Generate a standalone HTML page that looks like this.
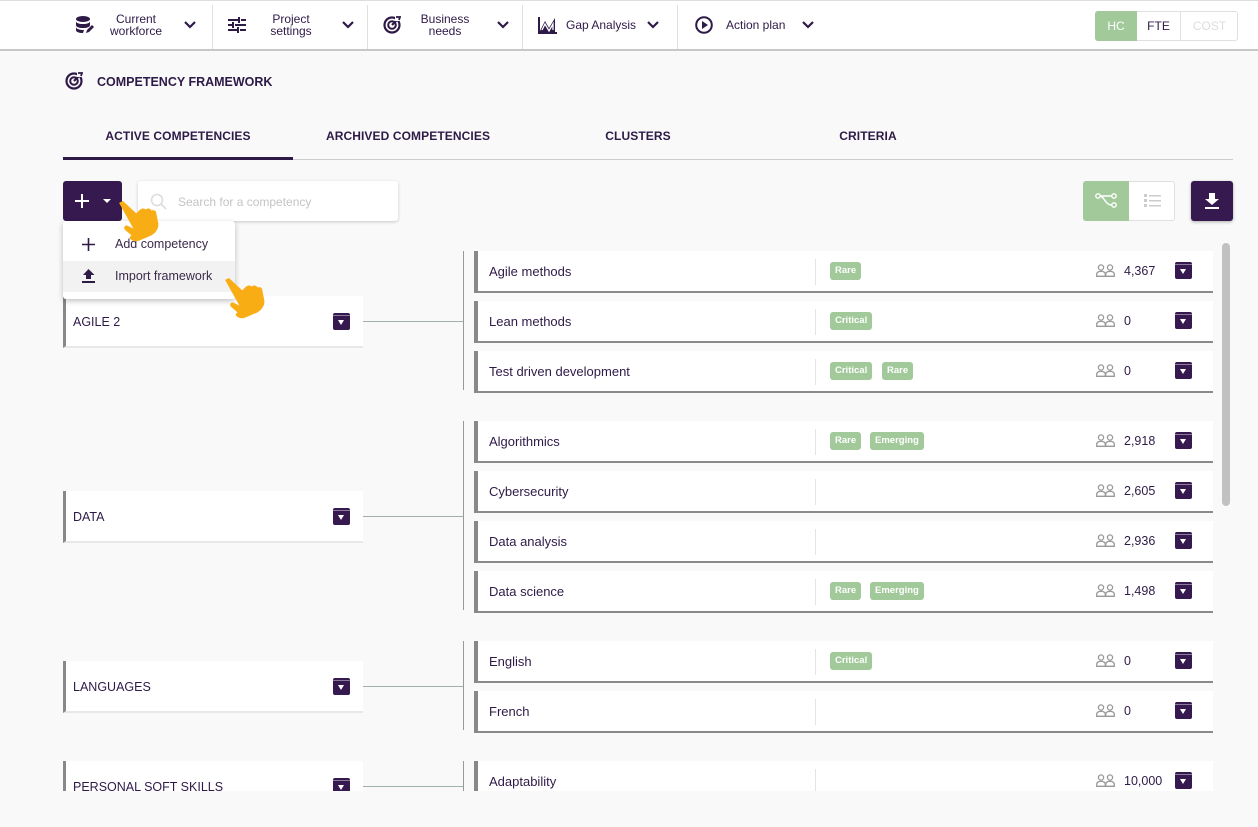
<!DOCTYPE html>
<html><head><meta charset="utf-8"><style>
*{box-sizing:border-box;margin:0;padding:0}
html,body{width:1258px;height:827px;overflow:hidden}
body{background:#f9f9f9;font-family:"Liberation Sans",sans-serif;color:#2a1a3a;position:relative}
.a{position:absolute}
.nav{left:0;top:0;width:1258px;height:51px;background:#fff;border-top:1px solid #ddd;border-bottom:2px solid #c8c8c8}
.ni{top:1px;height:48px;display:flex;align-items:center;font-size:12px;color:#2e1a47;line-height:12px;text-align:center}
.sep{top:5px;width:1px;height:44px;background:#e0e0e0}
.tab{top:129px;width:230px;text-align:center;font-size:12px;font-weight:bold;color:#2e1a47;letter-spacing:.1px}
.row{left:474px;width:739px;height:42px;background:#fff;border-left:4px solid #888;border-bottom:2px solid #8a8a8a}
.row .n{position:absolute;left:11px;top:13px;font-size:13px;color:#2e1a47}
.row .d{position:absolute;left:337px;top:8px;width:1px;height:26px;background:#e4e4e4}
.tag{position:absolute;top:11px;height:18px;padding:0 5px;background:#a1c99a;color:#fff;font-size:9.5px;font-weight:bold;line-height:18px;border-radius:3px}
.row .num{position:absolute;left:646px;top:13px;font-size:12.5px;color:#2e1a47}
.row .pp{position:absolute;left:618px;top:13px}
.arc{position:absolute;width:17px;height:17px;background:#35194f;border-radius:2px}
.arc:before{content:"";position:absolute;left:0;right:0;top:2px;height:1px;background:#8a7a9a}
.arc:after{content:"";position:absolute;left:5px;top:7px;border-left:3.5px solid transparent;border-right:3.5px solid transparent;border-top:5px solid #fff}
.row .arc{left:697px;top:11px}
.cl{left:63px;width:300px;height:52px;background:#fff;border-left:3px solid #888;border-bottom:2px solid #e8e8e8}
.cl .t{position:absolute;left:7px;top:19px;font-size:12.5px;color:#2e1a47}
.cl .arc{left:267px;top:17px}
.vl{left:463px;width:1px;background:#999}
.hl{left:363px;width:100px;height:1px;background:#9fb2a8}
</style></head><body>
<div class="a nav"></div>
<div class="a ni" style="left:74px">
<svg width="20" height="20" viewBox="0 0 20 20"><ellipse cx="9" cy="4" rx="7" ry="3" fill="#2e1a47"/><path d="M2 6v4c0 2 3 3 7 3s7-1 7-3V6c0 2-3 3-7 3S2 8 2 6z" fill="#2e1a47"/><path d="M2 12v3c0 2 3 3 7 3l1-3c-4 0-8-1-8-3z" fill="#2e1a47"/><path d="M12 18l1-3 5-5 2 2-5 5z" fill="#2e1a47"/></svg>
<div style="width:78px;margin-left:3px">Current<br>workforce</div>
<svg width="12" height="8" viewBox="0 0 12 8" style="margin-left:9px"><path d="M1 1l5 5 5-5" stroke="#2e1a47" stroke-width="2.2" fill="none"/></svg></div>
<div class="a sep" style="left:212px"></div>
<div class="a ni" style="left:228px">
<svg width="18" height="16" viewBox="0 0 18 16"><g stroke="#2e1a47" stroke-width="2"><path d="M0 3h10M13 3h5M0 8h4M7 8h11M0 13h9M12 13h6"/><path d="M11 0v6M5 5v6M10 10v6"/></g></svg>
<div style="width:90px;margin-left:0">Project<br>settings</div>
<svg width="12" height="8" viewBox="0 0 12 8" style="margin-left:6px"><path d="M1 1l5 5 5-5" stroke="#2e1a47" stroke-width="2.2" fill="none"/></svg></div>
<div class="a sep" style="left:367px"></div>
<div class="a ni" style="left:383px">
<svg width="18" height="18" viewBox="0 0 18 18"><circle cx="9" cy="9" r="7.5" fill="none" stroke="#2e1a47" stroke-width="2.2"/><circle cx="9" cy="9" r="3.8" fill="none" stroke="#2e1a47" stroke-width="2"/><path d="M9 9l7-7" stroke="#2e1a47" stroke-width="2.2"/><rect x="12" y="0" width="6" height="5" fill="#fff"/><path d="M13 1l4 0-1 3" stroke="#2e1a47" stroke-width="1.8" fill="none"/></svg>
<div style="width:88px;margin-left:0">Business<br>needs</div>
<svg width="12" height="8" viewBox="0 0 12 8" style="margin-left:8px"><path d="M1 1l5 5 5-5" stroke="#2e1a47" stroke-width="2.2" fill="none"/></svg></div>
<div class="a sep" style="left:522px"></div>
<div class="a ni" style="left:538px">
<svg width="19" height="17" viewBox="0 0 19 17"><path d="M1 0v16h18" stroke="#2e1a47" stroke-width="2" fill="none"/><path d="M2 14l5-10 4 7 6-10v14H2z" fill="#2e1a47"/><path d="M4 13l3-6 4 7 4-7v6" stroke="#fff" stroke-width="1.3" fill="none"/></svg>
<div style="margin-left:9px">Gap Analysis</div>
<svg width="12" height="8" viewBox="0 0 12 8" style="margin-left:11px"><path d="M1 1l5 5 5-5" stroke="#2e1a47" stroke-width="2.2" fill="none"/></svg></div>
<div class="a sep" style="left:677px"></div>
<div class="a ni" style="left:695px">
<svg width="18" height="18" viewBox="0 0 18 18"><circle cx="9" cy="9" r="7.8" fill="none" stroke="#2e1a47" stroke-width="2"/><path d="M7 5v8l6-4z" fill="#2e1a47"/></svg>
<div style="margin-left:13px">Action plan</div>
<svg width="12" height="8" viewBox="0 0 12 8" style="margin-left:17px"><path d="M1 1l5 5 5-5" stroke="#2e1a47" stroke-width="2.2" fill="none"/></svg></div>
<div class="a" style="left:1095px;top:11px;width:143px;height:30px;border:1px solid #e0e0e0;border-radius:3px;background:#fff;font-size:12px;font-weight:bold">
<div class="a" style="left:-1px;top:-1px;width:42px;height:30px;background:#a1c99a;color:#fff;border-radius:3px 0 0 3px;text-align:center;line-height:30px;font-weight:normal">HC</div>
<div class="a" style="left:41px;top:0;width:44px;height:28px;border-right:1px solid #e0e0e0;color:#2e1a47;text-align:center;line-height:28px;font-weight:normal">FTE</div>
<div class="a" style="left:85px;top:0;width:57px;height:28px;color:#ddd;text-align:center;line-height:28px;font-weight:normal">COST</div></div>
<svg class="a" style="left:65px;top:72px" width="18" height="18" viewBox="0 0 18 18"><circle cx="9" cy="9" r="7.5" fill="none" stroke="#2e1a47" stroke-width="2.2"/><circle cx="9" cy="9" r="3.8" fill="none" stroke="#2e1a47" stroke-width="2"/><path d="M9 9l7-7" stroke="#2e1a47" stroke-width="2.2"/><rect x="12" y="0" width="6" height="5" fill="#f9f9f9"/><path d="M13 1l4 0-1 3" stroke="#2e1a47" stroke-width="1.8" fill="none"/></svg>
<div class="a" style="left:97px;top:75px;font-size:12.5px;font-weight:bold;color:#2e1a47">COMPETENCY FRAMEWORK</div>
<div class="a tab" style="left:63px">ACTIVE COMPETENCIES</div>
<div class="a tab" style="left:293px">ARCHIVED COMPETENCIES</div>
<div class="a tab" style="left:523px">CLUSTERS</div>
<div class="a tab" style="left:753px">CRITERIA</div>
<div class="a" style="left:63px;top:159px;width:1170px;height:1px;background:#ccc"></div>
<div class="a" style="left:63px;top:157px;width:230px;height:3px;background:#2e1a47"></div>
<div class="a" style="left:63px;top:181px;width:59px;height:40px;background:#35194f;border-radius:3px"></div>
<svg class="a" style="left:75px;top:194px" width="14" height="14"><path d="M7 0v14M0 7h14" stroke="#fff" stroke-width="2"/></svg>
<svg class="a" style="left:103px;top:199px" width="8" height="5"><path d="M0 0h8L4 4z" fill="#fff"/></svg>
<div class="a" style="left:138px;top:181px;width:260px;height:40px;background:#fff;border-radius:3px;box-shadow:0 1px 3px rgba(0,0,0,.2)"></div>
<svg class="a" style="left:150px;top:193px" width="17" height="17"><circle cx="7" cy="7" r="5.5" stroke="#ddd" stroke-width="1.6" fill="none"/><path d="M11 11l5 5" stroke="#ddd" stroke-width="1.6"/></svg>
<div class="a" style="left:178px;top:195px;font-size:12px;color:#c4c4c4">Search for a competency</div>
<div class="a" style="left:1083px;top:181px;width:92px;height:40px;border:1px solid #e0e0e0;border-radius:3px;background:#fff"></div>
<div class="a" style="left:1083px;top:181px;width:46px;height:40px;background:#a1c99a;border-radius:3px 0 0 3px"></div>
<svg class="a" style="left:1095px;top:193px" width="24" height="16"><circle cx="3" cy="3" r="2.2" stroke="#fff" stroke-width="1.4" fill="none"/><circle cx="19" cy="3" r="2.2" stroke="#fff" stroke-width="1.4" fill="none"/><circle cx="19" cy="12" r="2.2" stroke="#fff" stroke-width="1.4" fill="none"/><path d="M5 3h12M5 3c4 0 5 9 12 9" stroke="#fff" stroke-width="1.4" fill="none"/></svg>
<svg class="a" style="left:1144px;top:193px" width="18" height="15" fill="#ccc"><rect x="0" y="1" width="3" height="3"/><rect x="0" y="6" width="3" height="3"/><rect x="0" y="11" width="3" height="3"/><rect x="5" y="2" width="12" height="1.5"/><rect x="5" y="7" width="12" height="1.5"/><rect x="5" y="12" width="12" height="1.5"/></svg>
<div class="a" style="left:1191px;top:181px;width:42px;height:40px;background:#35194f;border-radius:3px;box-shadow:0 1px 3px rgba(0,0,0,.3)"></div>
<svg class="a" style="left:1204px;top:193px" width="16" height="16"><path d="M5 0h6v6h4l-7 6-7-6h4z" fill="#fff"/><rect x="1" y="14" width="14" height="2" fill="#fff"/></svg>
<div class="a" style="left:1222px;top:243px;width:8px;height:263px;background:#c1c1c1;border-radius:4px"></div>
<div class="a" style="left:0;top:240px;width:1258px;height:551px;overflow:hidden">
<div class="a" style="left:0;top:-240px;width:1258px;height:791px">
<div class="a vl" style="top:251px;height:139px"></div>
<div class="a vl" style="top:421px;height:189px"></div>
<div class="a vl" style="top:641px;height:89px"></div>
<div class="a vl" style="top:761px;height:30px"></div>
<div class="a hl" style="top:321px"></div>
<div class="a hl" style="top:516px"></div>
<div class="a hl" style="top:686px"></div>
<div class="a hl" style="top:786px"></div>
<div class="a cl" style="top:296px"><div class="t">AGILE 2</div><div class="arc"></div></div>
<div class="a cl" style="top:491px"><div class="t">DATA</div><div class="arc"></div></div>
<div class="a cl" style="top:661px"><div class="t">LANGUAGES</div><div class="arc"></div></div>
<div class="a cl" style="top:761px;height:30px;border-bottom:none"><div class="t">PERSONAL SOFT SKILLS</div><div class="arc"></div></div>
<div class="a row" style="top:251px"><div class="n">Agile methods</div><div class="d"></div><span class="tag" style="left:352px">Rare</span><svg class="pp" width="19" height="13"><g stroke="#999" stroke-width="1.3" fill="none"><circle cx="5" cy="3.5" r="2.6"/><circle cx="14" cy="3.5" r="2.6"/><path d="M0.7 12.3v-2c0-2 2-3 4.3-3s4.3 1 4.3 3v2zM9.7 12.3v-2c0-2 2-3 4.3-3s4.3 1 4.3 3v2z"/></g></svg><div class="num">4,367</div><div class="arc"></div></div>
<div class="a row" style="top:301px"><div class="n">Lean methods</div><div class="d"></div><span class="tag" style="left:352px">Critical</span><svg class="pp" width="19" height="13"><g stroke="#999" stroke-width="1.3" fill="none"><circle cx="5" cy="3.5" r="2.6"/><circle cx="14" cy="3.5" r="2.6"/><path d="M0.7 12.3v-2c0-2 2-3 4.3-3s4.3 1 4.3 3v2zM9.7 12.3v-2c0-2 2-3 4.3-3s4.3 1 4.3 3v2z"/></g></svg><div class="num">0</div><div class="arc"></div></div>
<div class="a row" style="top:351px"><div class="n">Test driven development</div><div class="d"></div><span class="tag" style="left:352px">Critical</span><span class="tag" style="left:404px">Rare</span><svg class="pp" width="19" height="13"><g stroke="#999" stroke-width="1.3" fill="none"><circle cx="5" cy="3.5" r="2.6"/><circle cx="14" cy="3.5" r="2.6"/><path d="M0.7 12.3v-2c0-2 2-3 4.3-3s4.3 1 4.3 3v2zM9.7 12.3v-2c0-2 2-3 4.3-3s4.3 1 4.3 3v2z"/></g></svg><div class="num">0</div><div class="arc"></div></div>
<div class="a row" style="top:421px"><div class="n">Algorithmics</div><div class="d"></div><span class="tag" style="left:352px">Rare</span><span class="tag" style="left:392px">Emerging</span><svg class="pp" width="19" height="13"><g stroke="#999" stroke-width="1.3" fill="none"><circle cx="5" cy="3.5" r="2.6"/><circle cx="14" cy="3.5" r="2.6"/><path d="M0.7 12.3v-2c0-2 2-3 4.3-3s4.3 1 4.3 3v2zM9.7 12.3v-2c0-2 2-3 4.3-3s4.3 1 4.3 3v2z"/></g></svg><div class="num">2,918</div><div class="arc"></div></div>
<div class="a row" style="top:471px"><div class="n">Cybersecurity</div><div class="d"></div><svg class="pp" width="19" height="13"><g stroke="#999" stroke-width="1.3" fill="none"><circle cx="5" cy="3.5" r="2.6"/><circle cx="14" cy="3.5" r="2.6"/><path d="M0.7 12.3v-2c0-2 2-3 4.3-3s4.3 1 4.3 3v2zM9.7 12.3v-2c0-2 2-3 4.3-3s4.3 1 4.3 3v2z"/></g></svg><div class="num">2,605</div><div class="arc"></div></div>
<div class="a row" style="top:521px"><div class="n">Data analysis</div><div class="d"></div><svg class="pp" width="19" height="13"><g stroke="#999" stroke-width="1.3" fill="none"><circle cx="5" cy="3.5" r="2.6"/><circle cx="14" cy="3.5" r="2.6"/><path d="M0.7 12.3v-2c0-2 2-3 4.3-3s4.3 1 4.3 3v2zM9.7 12.3v-2c0-2 2-3 4.3-3s4.3 1 4.3 3v2z"/></g></svg><div class="num">2,936</div><div class="arc"></div></div>
<div class="a row" style="top:571px"><div class="n">Data science</div><div class="d"></div><span class="tag" style="left:352px">Rare</span><span class="tag" style="left:392px">Emerging</span><svg class="pp" width="19" height="13"><g stroke="#999" stroke-width="1.3" fill="none"><circle cx="5" cy="3.5" r="2.6"/><circle cx="14" cy="3.5" r="2.6"/><path d="M0.7 12.3v-2c0-2 2-3 4.3-3s4.3 1 4.3 3v2zM9.7 12.3v-2c0-2 2-3 4.3-3s4.3 1 4.3 3v2z"/></g></svg><div class="num">1,498</div><div class="arc"></div></div>
<div class="a row" style="top:641px"><div class="n">English</div><div class="d"></div><span class="tag" style="left:352px">Critical</span><svg class="pp" width="19" height="13"><g stroke="#999" stroke-width="1.3" fill="none"><circle cx="5" cy="3.5" r="2.6"/><circle cx="14" cy="3.5" r="2.6"/><path d="M0.7 12.3v-2c0-2 2-3 4.3-3s4.3 1 4.3 3v2zM9.7 12.3v-2c0-2 2-3 4.3-3s4.3 1 4.3 3v2z"/></g></svg><div class="num">0</div><div class="arc"></div></div>
<div class="a row" style="top:691px"><div class="n">French</div><div class="d"></div><svg class="pp" width="19" height="13"><g stroke="#999" stroke-width="1.3" fill="none"><circle cx="5" cy="3.5" r="2.6"/><circle cx="14" cy="3.5" r="2.6"/><path d="M0.7 12.3v-2c0-2 2-3 4.3-3s4.3 1 4.3 3v2zM9.7 12.3v-2c0-2 2-3 4.3-3s4.3 1 4.3 3v2z"/></g></svg><div class="num">0</div><div class="arc"></div></div>
<div class="a row" style="top:761px;height:30px;border-bottom:none"><div class="n">Adaptability</div><div class="d"></div><svg class="pp" width="19" height="13"><g stroke="#999" stroke-width="1.3" fill="none"><circle cx="5" cy="3.5" r="2.6"/><circle cx="14" cy="3.5" r="2.6"/><path d="M0.7 12.3v-2c0-2 2-3 4.3-3s4.3 1 4.3 3v2zM9.7 12.3v-2c0-2 2-3 4.3-3s4.3 1 4.3 3v2z"/></g></svg><div class="num">10,000</div><div class="arc"></div></div>
</div></div>
<div class="a" style="left:63px;top:221px;width:172px;height:78px;background:#fff;border-radius:3px;box-shadow:0 2px 6px rgba(0,0,0,.25)"></div>
<div class="a" style="left:63px;top:261px;width:172px;height:31px;background:#f2f2f2"></div>
<svg class="a" style="left:82px;top:238px" width="13" height="13"><path d="M6.5 0v13M0 6.5h13" stroke="#2e1a47" stroke-width="1.6"/></svg>
<div class="a" style="left:115px;top:237px;font-size:12.5px;color:#3a2a4a">Add competency</div>
<svg class="a" style="left:82px;top:269px" width="13" height="15"><path d="M6.5 0l6 6H9v4H4V6H1z" fill="#2e1a47"/><rect x="0" y="12" width="13" height="2" fill="#2e1a47"/></svg>
<div class="a" style="left:115px;top:269px;font-size:12.5px;color:#3a2a4a">Import framework</div>
<svg class="a" style="left:117px;top:200px" width="50" height="42" viewBox="0 0 52 44"><path d="M2 3l4-2 14 13 4-4c3-2 5-1 6 0 2-2 5-1 6 1 2-1 5 0 5 3l2 10c1 5-2 10-7 13l-14 6c-5 1-9-2-9-4l2-2-7-6c-2-3 1-5 3-4l6 3z" fill="#f9ad14"/></svg>
<svg class="a" style="left:222px;top:277px" width="52" height="42" viewBox="0 0 52 44"><path d="M2 3l4-2 14 13 4-4c3-2 5-1 6 0 2-2 5-1 6 1 2-1 5 0 5 3l2 10c1 5-2 10-7 13l-14 6c-5 1-9-2-9-4l2-2-7-6c-2-3 1-5 3-4l6 3z" fill="#f9ad14"/></svg>
</body></html>
